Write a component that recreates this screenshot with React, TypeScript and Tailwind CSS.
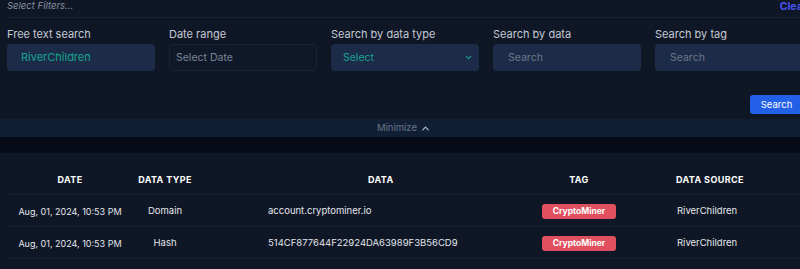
import { ChevronDown, ChevronUp } from "lucide-react";

const rows = [
  { date: "Aug, 01, 2024, 10:53 PM", type: "Domain", data: "account.cryptominer.io", tag: "CryptoMiner", source: "RiverChildren" },
  { date: "Aug, 01, 2024, 10:53 PM", type: "Hash", data: "514CF877644F22924DA63989F3B56CD9", tag: "CryptoMiner", source: "RiverChildren" },
];

export default function App() {
  return (
    <div className="w-[800px] h-[269px] overflow-hidden bg-[#0f1726] font-['Inter',sans-serif]">
      <div className="w-[810px]">
        {/* filters */}
        <div className="px-[7px]">
          <div className="flex justify-between items-start h-[18px] border-b border-[#1a2335]">
            <span className="text-[9.5px] italic text-[#8a92a2] leading-none mt-[1px]">Select Filters...</span>
            <span className="text-[10.5px] font-bold text-[#4752f2] leading-none mt-[2px] mr-[-4px]">Clear</span>
          </div>

          <div className="grid grid-cols-5 gap-[14px] pt-[9px]">
            <Field label="Free text search">
              <div className="h-[27px] rounded-[4px] bg-[#1c2b47] flex items-center pl-[14px] text-[11px] text-[#17a390]">RiverChildren</div>
            </Field>
            <Field label="Date range">
              <div className="h-[27px] rounded-[4px] bg-[#0f1828] border border-[#1a2334] flex items-center pl-[6px] text-[10.5px] text-[#7c8596]">Select Date</div>
            </Field>
            <Field label="Search by data type">
              <div className="h-[27px] rounded-[4px] bg-[#1c2b47] flex items-center justify-between pl-[12px] pr-[6px] text-[10.5px] text-[#17a390]">
                Select
                <ChevronDown size={9} strokeWidth={3} className="text-[#17a390]" />
              </div>
            </Field>
            <Field label="Search by data">
              <div className="h-[27px] rounded-[4px] bg-[#1c2b47] flex items-center pl-[15px] text-[10.5px] text-[#6e788a]">Search</div>
            </Field>
            <Field label="Search by tag">
              <div className="h-[27px] rounded-[4px] bg-[#1c2b47] flex items-center pl-[15px] text-[10.5px] text-[#6e788a]">Search</div>
            </Field>
          </div>

          <div className="flex justify-end pt-[24px] pb-[5px]">
            <button className="w-[53px] h-[19px] rounded-[3px] bg-[#2260e8] text-white text-[9.5px] leading-none">Search</button>
          </div>
        </div>

        {/* minimize bar */}
        <div className="w-[800px] h-[18px] bg-[#111f35] flex items-center justify-center gap-[3px] pl-[8px] text-[9.5px] text-[#6b7587]">
          Minimize
          <ChevronUp size={11} strokeWidth={2.5} className="text-[#b9c0cc]" />
        </div>
        <div className="w-[800px] h-[16px] bg-[#070b17]" />

        {/* table */}
        <div className="pl-[7px] pt-[12px] text-[9.5px]">
          <div className="flex h-[30px] items-center border-b border-[#172034] font-bold text-white text-[9px] tracking-[0.4px]">
            <div className="w-[126px] text-center">DATE</div>
            <div className="w-[64px] text-center">DATA TYPE</div>
            <div className="w-[305px] pl-[171px]">DATA</div>
            <div className="w-[154px] text-center">TAG</div>
            <div className="flex-1 pl-[20px]">DATA SOURCE</div>
          </div>
          {rows.map((r, i) => (
            <div key={i} className="flex h-[32px] items-center pt-[2px] border-b border-[#172034] text-[#e3e6ec]">
              <div className="w-[126px] text-center text-[9px]">{r.date}</div>
              <div className="w-[64px] text-center">{r.type}</div>
              <div className="w-[305px] pl-[71px]">{r.data}</div>
              <div className="w-[154px] flex justify-center">
                <span className="w-[74px] h-[15px] rounded-[3px] bg-[#e1505e] text-white font-bold text-[8.5px] flex items-center justify-center">{r.tag}</span>
              </div>
              <div className="flex-1 pl-[21px]">{r.source}</div>
            </div>
          ))}
        </div>
      </div>
    </div>
  );
}

function Field({ label, children }: { label: string; children: React.ReactNode }) {
  return (
    <div>
      <div className="text-[11px] text-[#c5cad4] h-[17px] leading-[14px]">{label}</div>
      {children}
    </div>
  );
}
